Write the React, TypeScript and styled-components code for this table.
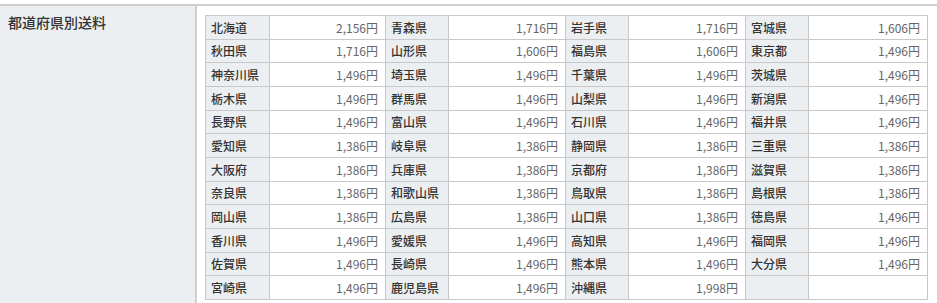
import React from "react";
import styled, { createGlobalStyle } from "styled-components";

const GlobalStyle = createGlobalStyle`
  html, body {
    margin: 0;
    padding: 0;
    background: #fff;
  }
  body {
    font-family: "Noto Sans CJK JP", "Noto Sans", sans-serif;
    color: #333;
  }
`;

const Page = styled.div`
  padding-top: 4px;
`;

const Spec = styled.table`
  width: 100%;
  border-collapse: collapse;
  border-top: 2px solid #cfcfcf;
`;

const SpecHead = styled.th`
  width: 187px;
  padding: 6px 0 0 8px;
  background: #eceff1;
  border-right: 2px solid #d0d0d0;
  vertical-align: top;
  text-align: left;
  font-size: 14px;
  font-weight: 500;
  color: #333;
  line-height: 20px;
  height: 297px;
`;

const SpecBody = styled.td`
  padding: 9px 0 0 8px;
  vertical-align: top;
`;

const RateTable = styled.table`
  width: 722px;
  border-collapse: collapse;
  table-layout: fixed;
  font-size: 12px;
`;

const Row = styled.tr`
  height: 23.67px;
`;

const Pref = styled.td`
  background: #eceff1;
  border: 1px solid #c8c8c8;
  padding: 0 0 0 5px;
  color: #333;
  font-weight: 500;
  white-space: nowrap;
`;

const Price = styled.td`
  background: #fff;
  border: 1px solid #c8c8c8;
  padding: 0 7px 0 0;
  text-align: right;
  color: #666;
  white-space: nowrap;
`;

type Entry = [string, string] | null;

const rows: Entry[][] = [
  [["北海道", "2,156"], ["青森県", "1,716"], ["岩手県", "1,716"], ["宮城県", "1,606"]],
  [["秋田県", "1,716"], ["山形県", "1,606"], ["福島県", "1,606"], ["東京都", "1,496"]],
  [["神奈川県", "1,496"], ["埼玉県", "1,496"], ["千葉県", "1,496"], ["茨城県", "1,496"]],
  [["栃木県", "1,496"], ["群馬県", "1,496"], ["山梨県", "1,496"], ["新潟県", "1,496"]],
  [["長野県", "1,496"], ["富山県", "1,496"], ["石川県", "1,496"], ["福井県", "1,496"]],
  [["愛知県", "1,386"], ["岐阜県", "1,386"], ["静岡県", "1,386"], ["三重県", "1,386"]],
  [["大阪府", "1,386"], ["兵庫県", "1,386"], ["京都府", "1,386"], ["滋賀県", "1,386"]],
  [["奈良県", "1,386"], ["和歌山県", "1,386"], ["鳥取県", "1,386"], ["島根県", "1,386"]],
  [["岡山県", "1,386"], ["広島県", "1,386"], ["山口県", "1,386"], ["徳島県", "1,496"]],
  [["香川県", "1,496"], ["愛媛県", "1,496"], ["高知県", "1,496"], ["福岡県", "1,496"]],
  [["佐賀県", "1,496"], ["長崎県", "1,496"], ["熊本県", "1,496"], ["大分県", "1,496"]],
  [["宮崎県", "1,496"], ["鹿児島県", "1,496"], ["沖縄県", "1,998"], null],
];

const colWidths = [64, 116, 63, 117, 63, 117, 63, 119];

const App: React.FC = () => {
  return (
    <Page>
      <GlobalStyle />
      <Spec>
        <tbody>
          <tr>
            <SpecHead>都道府県別送料</SpecHead>
            <SpecBody>
              <RateTable>
                <colgroup>
                  {colWidths.map((w, i) => (
                    <col key={i} style={{ width: w }} />
                  ))}
                </colgroup>
                <tbody>
                  {rows.map((row, r) => (
                    <Row key={r}>
                      {row.map((entry, c) => (
                        <React.Fragment key={c}>
                          <Pref>{entry ? entry[0] : ""}</Pref>
                          <Price>{entry ? `${entry[1]}円` : ""}</Price>
                        </React.Fragment>
                      ))}
                    </Row>
                  ))}
                </tbody>
              </RateTable>
            </SpecBody>
          </tr>
        </tbody>
      </Spec>
    </Page>
  );
};

export default App;
